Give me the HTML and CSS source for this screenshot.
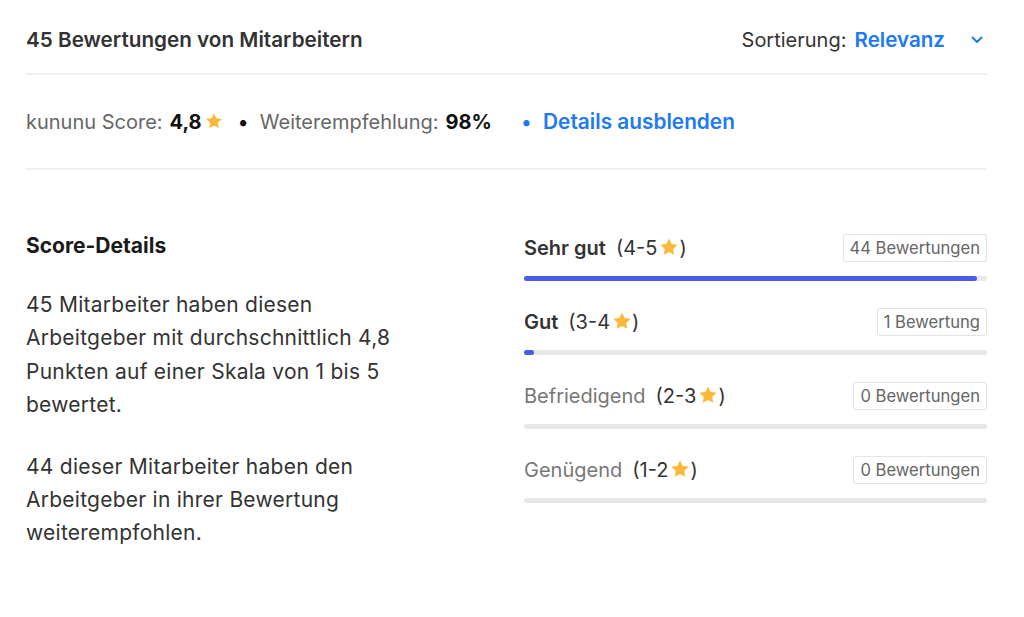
FILE: index.html
```html
<!DOCTYPE html>
<html lang="de">
<head>
<meta charset="utf-8">
<link rel="stylesheet" href="styles.css">
</head>
<body>
<div class="wrap">
  <header class="top">
    <h2 class="title">45 Bewertungen von Mitarbeitern</h2>
    <div class="sort">
      <span class="sort-label">Sortierung:</span>
      <span class="sort-value">Relevanz</span>
      <svg class="chev" width="12" height="8" viewBox="0 0 12 8"><path d="M1.5 1.5 L6 6 L10.5 1.5" fill="none" stroke="#2079f0" stroke-width="2" stroke-linecap="round" stroke-linejoin="round"/></svg>
    </div>
  </header>

  <div class="summary">
    <span class="muted">kununu Score:</span>
    <b class="strong">4,8</b>
    <svg class="star" width="18" height="18" viewBox="0 0 24 24"><path d="M12 1.8l3.1 6.6 7.2.9-5.3 5 1.4 7.1L12 17.9l-6.4 3.5L7 14.3l-5.3-5 7.2-.9z" fill="#fdb739"/></svg>
    <span class="dot">•</span>
    <span class="muted">Weiterempfehlung:</span>
    <b class="strong">98%</b>
    <span class="link-dot">•</span>
    <a class="link">Details ausblenden</a>
  </div>

  <section class="details">
    <div class="left">
      <h3 class="sub">Score-Details</h3>
      <p class="para">45 Mitarbeiter haben diesen Arbeitgeber mit durchschnittlich 4,8 Punkten auf einer Skala von 1 bis 5 bewertet.</p>
      <p class="para">44 dieser Mitarbeiter haben den Arbeitgeber in ihrer Bewertung weiterempfohlen.</p>
    </div>
    <div class="right">
      <div class="row">
        <div class="row-head">
          <span class="label active"><b>Sehr gut</b><span class="range">(4-5<svg class="star-sm" width="20" height="20" viewBox="0 0 24 24"><path d="M12 1.8l3.1 6.6 7.2.9-5.3 5 1.4 7.1L12 17.9l-6.4 3.5L7 14.3l-5.3-5 7.2-.9z" fill="#fdb739"/></svg>)</span></span>
          <span class="badge">44 Bewertungen</span>
        </div>
        <div class="track"><div class="fill" style="width:97.8%"></div></div>
      </div>
      <div class="row">
        <div class="row-head">
          <span class="label active"><b>Gut</b><span class="range">(3-4<svg class="star-sm" width="20" height="20" viewBox="0 0 24 24"><path d="M12 1.8l3.1 6.6 7.2.9-5.3 5 1.4 7.1L12 17.9l-6.4 3.5L7 14.3l-5.3-5 7.2-.9z" fill="#fdb739"/></svg>)</span></span>
          <span class="badge">1 Bewertung</span>
        </div>
        <div class="track"><div class="fill" style="width:2.2%"></div></div>
      </div>
      <div class="row">
        <div class="row-head">
          <span class="label"><span class="name">Befriedigend</span><span class="range">(2-3<svg class="star-sm" width="20" height="20" viewBox="0 0 24 24"><path d="M12 1.8l3.1 6.6 7.2.9-5.3 5 1.4 7.1L12 17.9l-6.4 3.5L7 14.3l-5.3-5 7.2-.9z" fill="#fdb739"/></svg>)</span></span>
          <span class="badge">0 Bewertungen</span>
        </div>
        <div class="track"></div>
      </div>
      <div class="row">
        <div class="row-head">
          <span class="label"><span class="name">Genügend</span><span class="range">(1-2<svg class="star-sm" width="20" height="20" viewBox="0 0 24 24"><path d="M12 1.8l3.1 6.6 7.2.9-5.3 5 1.4 7.1L12 17.9l-6.4 3.5L7 14.3l-5.3-5 7.2-.9z" fill="#fdb739"/></svg>)</span></span>
          <span class="badge">0 Bewertungen</span>
        </div>
        <div class="track"></div>
      </div>
    </div>
  </section>
</div>
</body>
</html>
```

FILE: styles.css
```css
* { box-sizing: border-box; }
html, body { margin: 0; padding: 0; background: #fff; }
body {
  font-family: Inter, "Noto Sans", "Liberation Sans", sans-serif;
  color: #333;
  font-size: 20px;
}
.wrap {
  width: 961px;
  margin-left: 26px;
}
.top {
  display: flex;
  justify-content: space-between;
  align-items: center;
  padding: 28px 0 21px;
  border-bottom: 2px solid #f0f0f0;
}
.title {
  margin: 0;
  font-size: 20.7px;
  line-height: 24px;
  font-weight: 600;
  color: #333;
}
.sort {
  display: flex;
  align-items: center;
  line-height: 24px;
  padding-right: 4px;
}
.sort-label { color: #333; }
.sort-value {
  color: #2079f0;
  font-weight: 600;
  font-size: 20.6px;
  margin-left: 8px;
}
.chev { margin-left: 26px; }

.summary {
  display: flex;
  align-items: center;
  padding: 35px 0 34px;
  line-height: 24px;
  border-bottom: 2px solid #f0f0f0;
}
.muted { color: #666; }
.strong { color: #111; font-weight: 700; margin-left: 7px; }
.star { margin-left: 3px; margin-top: -3px; }
.dot { color: #111; margin: 0 11px 0 15px; }
.link-dot { color: #2079f0; margin: 0 11px 0 29px; }
.link { color: #2079f0; font-weight: 600; font-size: 20.8px; }

.details {
  display: grid;
  grid-template-columns: 1fr 463px;
  padding-top: 64px;
}
.sub {
  margin: 0;
  font-size: 21px;
  line-height: 24px;
  font-weight: 700;
  color: #1a1a1a;
}
.para {
  margin: 30px 0 0;
  max-width: 380px;
  font-size: 21px;
  letter-spacing: 0.25px;
  line-height: 33.4px;
  color: #333;
}
.para + .para { margin-top: 28px; }

.row { margin-bottom: 27px; }
.row-head {
  display: flex;
  justify-content: space-between;
  align-items: center;
  height: 28px;
}
.label {
  display: flex;
  align-items: center;
  color: #333;
}
.label b { font-weight: 600; color: #333; }
.label .name { color: #777; }
.range { margin-left: 10px; display: inline-flex; align-items: center; color: #333; }
.star-sm { margin: -3px 0 0 2px; }
.badge {
  border: 1px solid #e4e4e4;
  border-radius: 2px;
  font-size: 16.6px;
  line-height: 26px;
  padding: 0 6px;
  color: #666;
}
.track {
  margin-top: 14px;
  height: 5px;
  border-radius: 3px;
  background: #e8e8e8;
}
.fill {
  height: 5px;
  border-radius: 3px;
  background: #4a5de6;
}
```
